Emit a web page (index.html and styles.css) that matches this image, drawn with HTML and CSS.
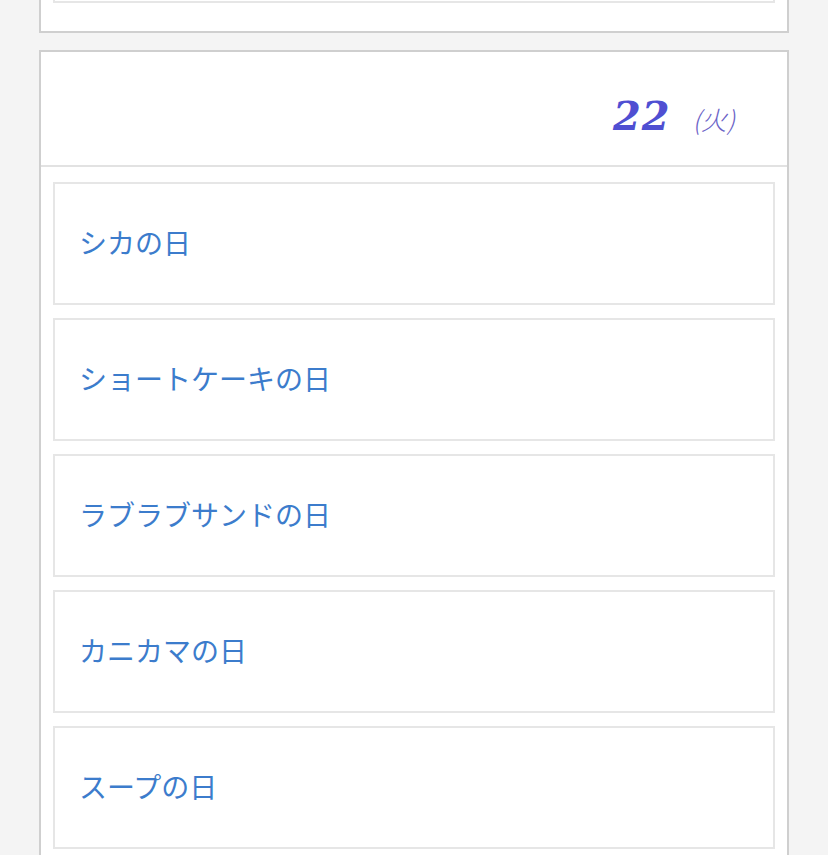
FILE: index.html
```html
<!DOCTYPE html>
<html lang="ja">
<head>
    <meta charset="UTF-8">
    <meta name="viewport" content="width=device-width, initial-scale=1.0">
    <title>今日は何の日 - 2月</title>
    <link rel="stylesheet" href="styles.css">
</head>
<body>
    <div class="calendar">
        <section class="day">
            <div class="day-head">
                <span class="day-num">21</span>
                <span class="day-week">(月)</span>
            </div>
            <ul class="events">
                <li class="event">食糧の日</li>
                <li class="event">日刊新聞創刊の日</li>
            </ul>
        </section>
        <section class="day">
            <div class="day-head">
                <span class="day-num">22</span>
                <span class="day-week">(火)</span>
            </div>
            <ul class="events">
                <li class="event">シカの日</li>
                <li class="event">ショートケーキの日</li>
                <li class="event">ラブラブサンドの日</li>
                <li class="event">カニカマの日</li>
                <li class="event">スープの日</li>
                <li class="event">猫の日</li>
            </ul>
        </section>
    </div>
</body>
</html>
```

FILE: styles.css
```css
html, body {
    margin: 0;
    padding: 0;
}
body {
    background-color: #f4f4f4;
    font-family: "Noto Sans CJK JP", "Noto Sans", sans-serif;
    overflow: hidden;
}
.calendar {
    /* page is scrolled down to the end of the previous day */
    margin-top: -388px;
    padding: 0 39px;
    display: flex;
    flex-direction: column;
    gap: 17px;
}
.day {
    background-color: #FFFFFF;
    border: 2px solid #cfcfcf;
}
.day-head {
    height: 113px;
    border-bottom: 2px solid #e2e2e2;
    display: flex;
    justify-content: flex-end;
    align-items: baseline;
    padding: 0 52px 0 0;
    box-sizing: content-box;
    overflow: hidden;
}
.day-num {
    font-family: "DejaVu Serif", serif;
    font-weight: bold;
    font-style: italic;
    font-size: 40px;
    letter-spacing: 1px;
    color: #4f4fd2;
    line-height: 128px;
}
.day-week {
    margin-left: 22px;
    font-size: 26px;
    font-style: italic;
    font-weight: 300;
    color: #6a62c6;
}
.events {
    list-style: none;
    margin: 0;
    padding: 15px 12px 15px 12px;
}
.event {
    height: 115px;
    margin-bottom: 13px;
    padding: 0 24px 4px 24px;
    border: 2px solid #e6e6e6;
    display: flex;
    align-items: center;
    font-size: 28px;
    color: #3c7ccc;
}
```
